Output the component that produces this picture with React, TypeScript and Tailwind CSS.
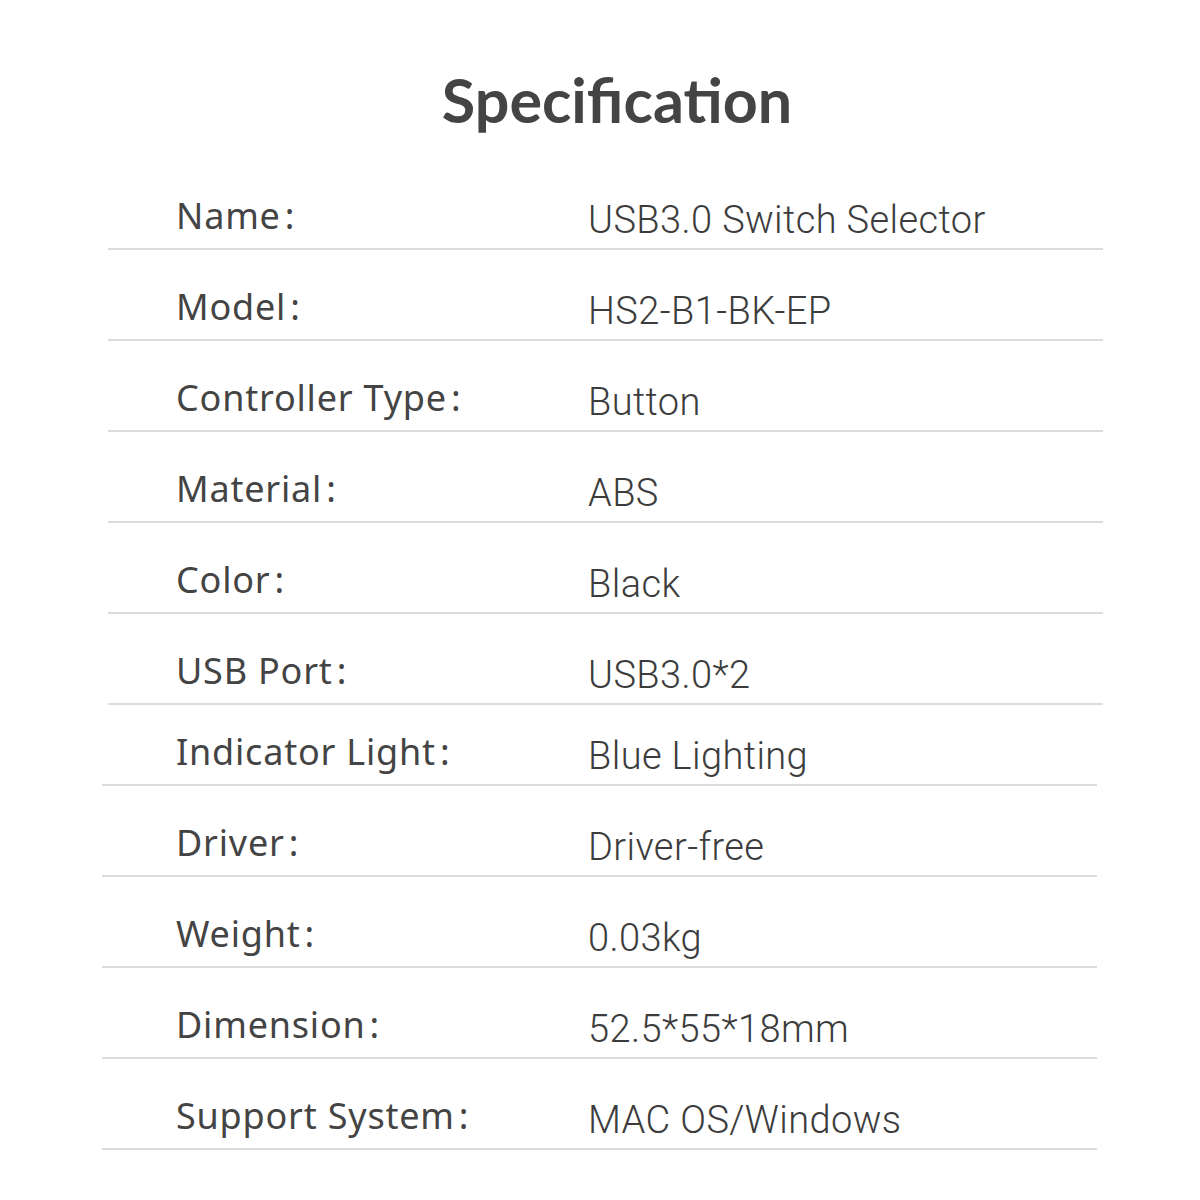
const specsTop = [
  { label: 'Name', value: 'USB3.0 Switch Selector' },
  { label: 'Model', value: 'HS2-B1-BK-EP' },
  { label: 'Controller Type', value: 'Button' },
  { label: 'Material', value: 'ABS' },
  { label: 'Color', value: 'Black' },
  { label: 'USB Port', value: 'USB3.0*2' },
];

const specsBottom = [
  { label: 'Indicator Light', value: 'Blue Lighting', h: 'h-[81px]' },
  { label: 'Driver', value: 'Driver-free', h: 'h-[91px]' },
  { label: 'Weight', value: '0.03kg', h: 'h-[91px]' },
  { label: 'Dimension', value: '52.5*55*18mm', h: 'h-[91px]' },
  { label: 'Support System', value: 'MAC OS/Windows', h: 'h-[91px]' },
];

const SpecRow = ({ label, value, h, labelCls }: { label: string; value: string; h: string; labelCls: string }) => (
  <div className={`flex items-end ${h} border-b-2 border-[#dcdcdc] pb-[14px]`}>
    <div className={`${labelCls} shrink-0 text-[36px] leading-none text-[#444] font-['Noto_Sans',sans-serif] tracking-[0.8px]`}>
      {label}
      <span className="ml-[4px]">:</span>
    </div>
    <div className="text-[38px] leading-none font-light text-[#3c3c3c] font-['Roboto',sans-serif] tracking-[0.4px] translate-y-[5px]">
      {value}
    </div>
  </div>
);

export default function App() {
  return (
    <div className="w-[1200px] h-[1200px] bg-white overflow-hidden">
      <h1 className="pt-[69px] h-[159px] text-center text-[61px] leading-none font-bold text-[#444] font-['Lato',sans-serif] pl-[34px]">
        Specification
      </h1>
      <div className="ml-[108px] w-[995px]">
        {specsTop.map((s) => (
          <SpecRow key={s.label} label={s.label} value={s.value} h="h-[91px]" labelCls="pl-[68px] w-[480px]" />
        ))}
      </div>
      <div className="ml-[102px] w-[995px]">
        {specsBottom.map((s) => (
          <SpecRow key={s.label} label={s.label} value={s.value} h={s.h} labelCls="pl-[74px] w-[486px]" />
        ))}
      </div>
    </div>
  );
}
